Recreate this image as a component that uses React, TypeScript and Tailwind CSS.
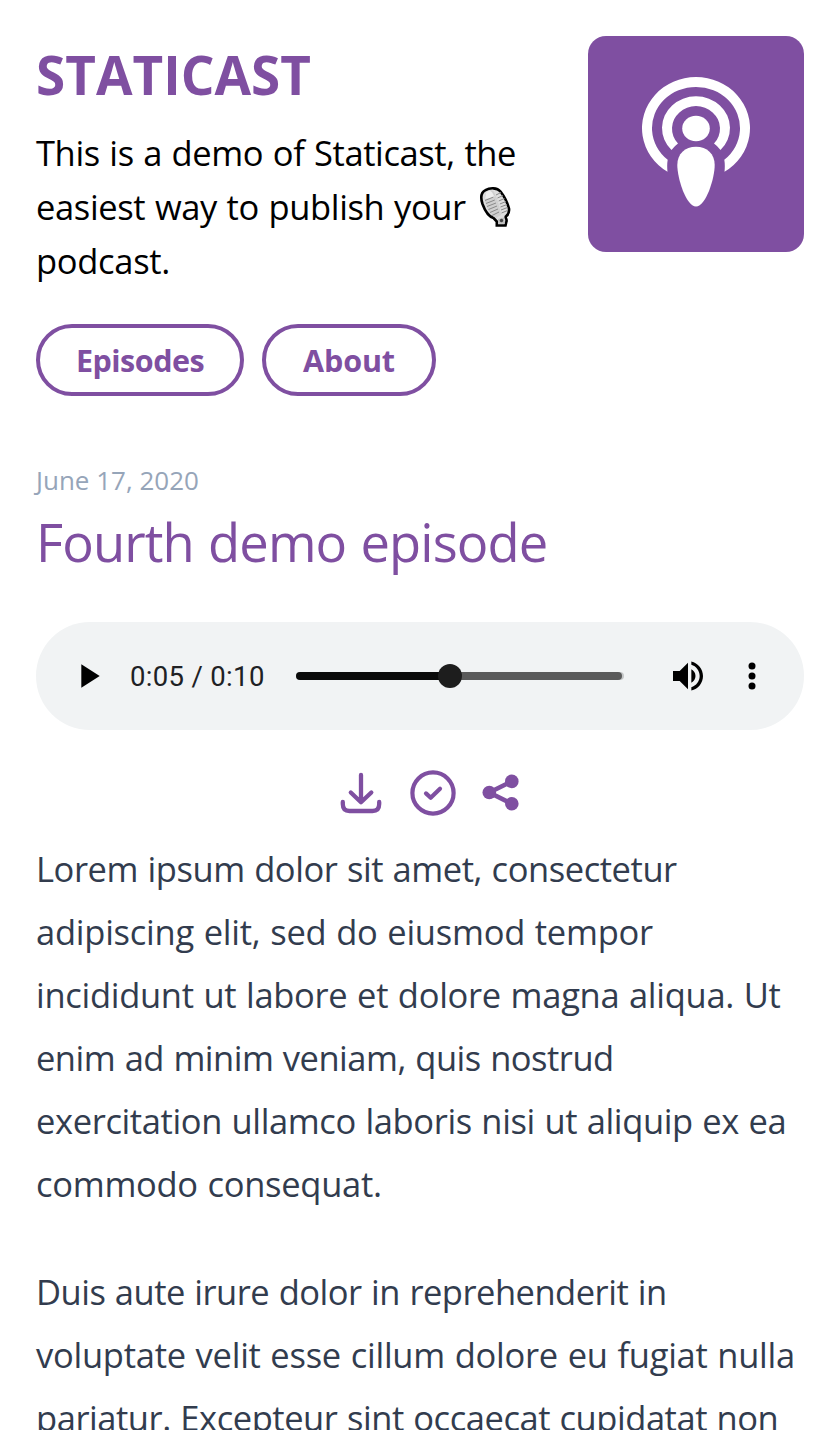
type Line = { text: string; tracking: string };

const intro: Line[] = [
  { text: 'Lorem ipsum dolor sit amet, consectetur', tracking: 'tracking-[-0.44px]' },
  { text: 'adipiscing elit, sed do eiusmod tempor', tracking: 'tracking-[-0.24px]' },
  { text: 'incididunt ut labore et dolore magna aliqua. Ut', tracking: 'tracking-[-0.29px]' },
  { text: 'enim ad minim veniam, quis nostrud', tracking: 'tracking-[-0.5px]' },
  { text: 'exercitation ullamco laboris nisi ut aliquip ex ea', tracking: 'tracking-[-0.38px]' },
  { text: 'commodo consequat.', tracking: 'tracking-[-0.28px]' },
];

const body: Line[] = [
  { text: 'Duis aute irure dolor in reprehenderit in', tracking: 'tracking-[-0.5px]' },
  { text: 'voluptate velit esse cillum dolore eu fugiat nulla', tracking: 'tracking-[-0.25px]' },
  { text: 'pariatur. Excepteur sint occaecat cupidatat non', tracking: 'tracking-[-0.45px]' },
];

function Paragraph({ lines }: { lines: Line[] }) {
  return (
    <p className="text-[34.5px] leading-[63px] text-[#323c4e] [word-spacing:1px]">
      {lines.map((line) => (
        <span key={line.text} className={`block whitespace-nowrap ${line.tracking}`}>
          {line.text}
        </span>
      ))}
    </p>
  );
}

function CoverArt() {
  return (
    <svg viewBox="0 0 216 216" className="size-[216px] shrink-0 rounded-[18px] bg-[#7f4fa1]" fill="#fff">
      <path d="M79.5 135.7A54 51.2 0 1 1 136.5 135.7Q137.2 129 136.3 123.7A44 41.2 0 1 0 79.7 123.7Q78.8 129 79.5 135.7Z" />
      <path d="M83.5 114A34 31.7 0 1 1 132.5 114Q129.5 110 126 107.5A24 22.5 0 1 0 90 107.5Q86.5 110 83.5 114Z" />
      <ellipse cx="108" cy="92.5" rx="13.8" ry="12.8" />
      <path d="M108 110.8C119 110.8 126.7 118 126.7 129C126.7 142 118 170.5 108 170.5S89.3 142 89.3 129C89.3 118 97 110.8 108 110.8Z" />
    </svg>
  );
}

function Microphone() {
  return (
    <svg viewBox="0 0 34 44" className="ml-[4px] inline-block h-[44px] w-[34px] align-[-10px]">
      <path
        d="M3.500 18C1.500 12 2 6.500 6.500 4.200C11 1.500 18 1.500 21.500 5.500C25 10 28.500 17 30 22.500C30.500 26.500 29 29 26.800 30.500C26 32 28.500 33.500 27.300 36L26.500 39.500H17.800V35.500L14.500 32C9.500 30.500 5.500 23.500 3.500 18Z"
        fill="#dedede"
        stroke="#000"
        strokeWidth="2.6"
      />
      <path d="M6 9C8 3.500 13 3 15 6C18 12 21 21 22 29L17 32C11 29 4 17 6 9Z" fill="#cfcfcf" />
      <path d="M7 7C9 4 12 4 14 8L15.500 11L6 13Z" fill="#eee" />
      <path
        d="M6 14.500L14.500 11M7 17.500L15.800 14M8 20.500L17 17M9.500 23.500L18 20M11 26.500L19 23M13 29.500L20 26M17 9L22 6.500M18.500 12L24 9.500M19.700 15L25.500 12.500M20.800 18L27 15.500M21.500 21L28 18.500M22 24L28.500 21.500M22.500 27L28.500 24.500"
        stroke="#8a8a8a"
        strokeWidth="1"
      />
      <path d="M19 33L25 31.500L26 37.800H19.500Z" fill="#bdbdbd" />
      <circle cx="22.500" cy="34.500" r="1.700" fill="#444" />
    </svg>
  );
}

function Player() {
  return (
    <div className="mt-[46px] flex h-[108px] items-center rounded-full bg-[#f1f3f4] pl-8 font-[Roboto,sans-serif]">
      <svg viewBox="0 0 24 24" className="size-10 shrink-0">
        <path d="M8 5v14l11-7z" />
      </svg>
      <span className="ml-[22px] w-[166px] whitespace-nowrap pt-[2px] text-[27.5px] leading-10 tracking-[0.33px] text-[#202124]">
        0:05 / 0:10
      </span>
      <div className="relative flex h-6 w-[328px] items-center">
        <div className="flex h-2 w-full overflow-hidden rounded-full bg-[#c4c6c7]">
          <div className="h-2 w-[154px] bg-[#0a0a0a]" />
          <div className="h-2 w-[172px] rounded-r-full bg-[#5a5a5a]" />
        </div>
        <div className="absolute left-[142px] top-0 size-6 rounded-full bg-[#1d1d1d]" />
      </div>
      <svg viewBox="0 0 24 24" className="ml-11 size-10 shrink-0">
        <path d="M3 9v6h4l5 5V4L7 9H3zm13.5 3c0-1.77-1.02-3.29-2.5-4.03v8.05c1.48-.73 2.5-2.25 2.5-4.02zM14 3.23v2.06c2.89.86 5 3.54 5 6.71s-2.11 5.85-5 6.71v2.06c4.01-.91 7-4.49 7-8.77s-2.99-7.86-7-8.77z" />
      </svg>
      <svg viewBox="0 0 40 40" className="ml-6 size-10 shrink-0">
        <circle cx="20" cy="10" r="3.5" />
        <circle cx="20" cy="20" r="3.5" />
        <circle cx="20" cy="30" r="3.5" />
      </svg>
    </div>
  );
}

function Actions() {
  return (
    <div className="mt-10 flex h-[46px] pl-[304px] text-[#7f4fa1]">
      <svg viewBox="0 0 42 46" className="h-[46px] w-[42px]" fill="none" stroke="currentColor" strokeWidth="4.3" strokeLinecap="round" strokeLinejoin="round">
        <path d="M21 5V32M10.800 22.500L21 32.300L31.300 22.500" />
        <path d="M2.800 32V34Q2.800 41 9.500 41H32.500Q39.200 41 39.200 34V32" />
      </svg>
      <svg viewBox="0 0 46 46" className="ml-7 size-[46px]" fill="none" stroke="currentColor" strokeWidth="4.2" strokeLinecap="round" strokeLinejoin="round">
        <circle cx="23" cy="23" r="20.6" />
        <path d="M16 23.400L20.700 27.700L30 18.700" />
      </svg>
      <svg viewBox="0 0 40 46" className="ml-[25px] h-[46px] w-10" fill="currentColor">
        <path d="M30.800 11.400L8.300 22.500L30.800 33.800" fill="none" stroke="currentColor" strokeWidth="4.6" />
        <circle cx="8.300" cy="22.500" r="6.8" />
        <circle cx="30.800" cy="11.400" r="6.8" />
        <circle cx="30.800" cy="33.800" r="6.8" />
      </svg>
    </div>
  );
}

export default function App() {
  return (
    <div className="h-[1430px] w-[840px] overflow-hidden bg-white px-9 pt-9 font-['Open_Sans','Noto_Sans',sans-serif]">
      <header className="flex h-[360px] items-start justify-between">
        <div>
          <h1 className="whitespace-nowrap pt-px text-[53px] font-bold leading-[75px] text-[#7f4fa1]">STATICAST</h1>
          <p className="mt-[14px] text-[34.5px] leading-[54px] text-black [word-spacing:1px]">
            <span className="block h-[54px] whitespace-nowrap tracking-[-0.39px]">This is a demo of Staticast, the</span>
            <span className="block h-[54px] whitespace-nowrap tracking-[-0.36px]">
              <span>easiest way to publish your </span>
              <Microphone />
            </span>
            <span className="block h-[54px] tracking-[-0.3px]">podcast.</span>
          </p>
          <nav className="mt-9 flex gap-[18px] text-[30.5px] font-bold text-[#7f4fa1]">
            <a className="flex h-[72px] w-[208px] items-center justify-center rounded-full border-4 border-[#7f4fa1] pt-[2px] tracking-[-0.5px]">
              Episodes
            </a>
            <a className="flex h-[72px] w-[174px] items-center justify-center rounded-full border-4 border-[#7f4fa1] pt-[2px] tracking-[-0.1px]">
              About
            </a>
          </nav>
        </div>
        <CoverArt />
      </header>
      <main className="pt-16">
        <time className="block text-[26px] leading-10 text-[#96a5b9]">June 17, 2020</time>
        <h2 className="mt-2 whitespace-nowrap text-[52.5px] leading-[68px] tracking-[-0.9px] text-[#7f4fa1] [word-spacing:1.5px]">
          Fourth demo episode
        </h2>
        <Player />
        <Actions />
        <div className="mt-[21px] flex flex-col gap-[45px]">
          <Paragraph lines={intro} />
          <Paragraph lines={body} />
        </div>
      </main>
    </div>
  );
}
